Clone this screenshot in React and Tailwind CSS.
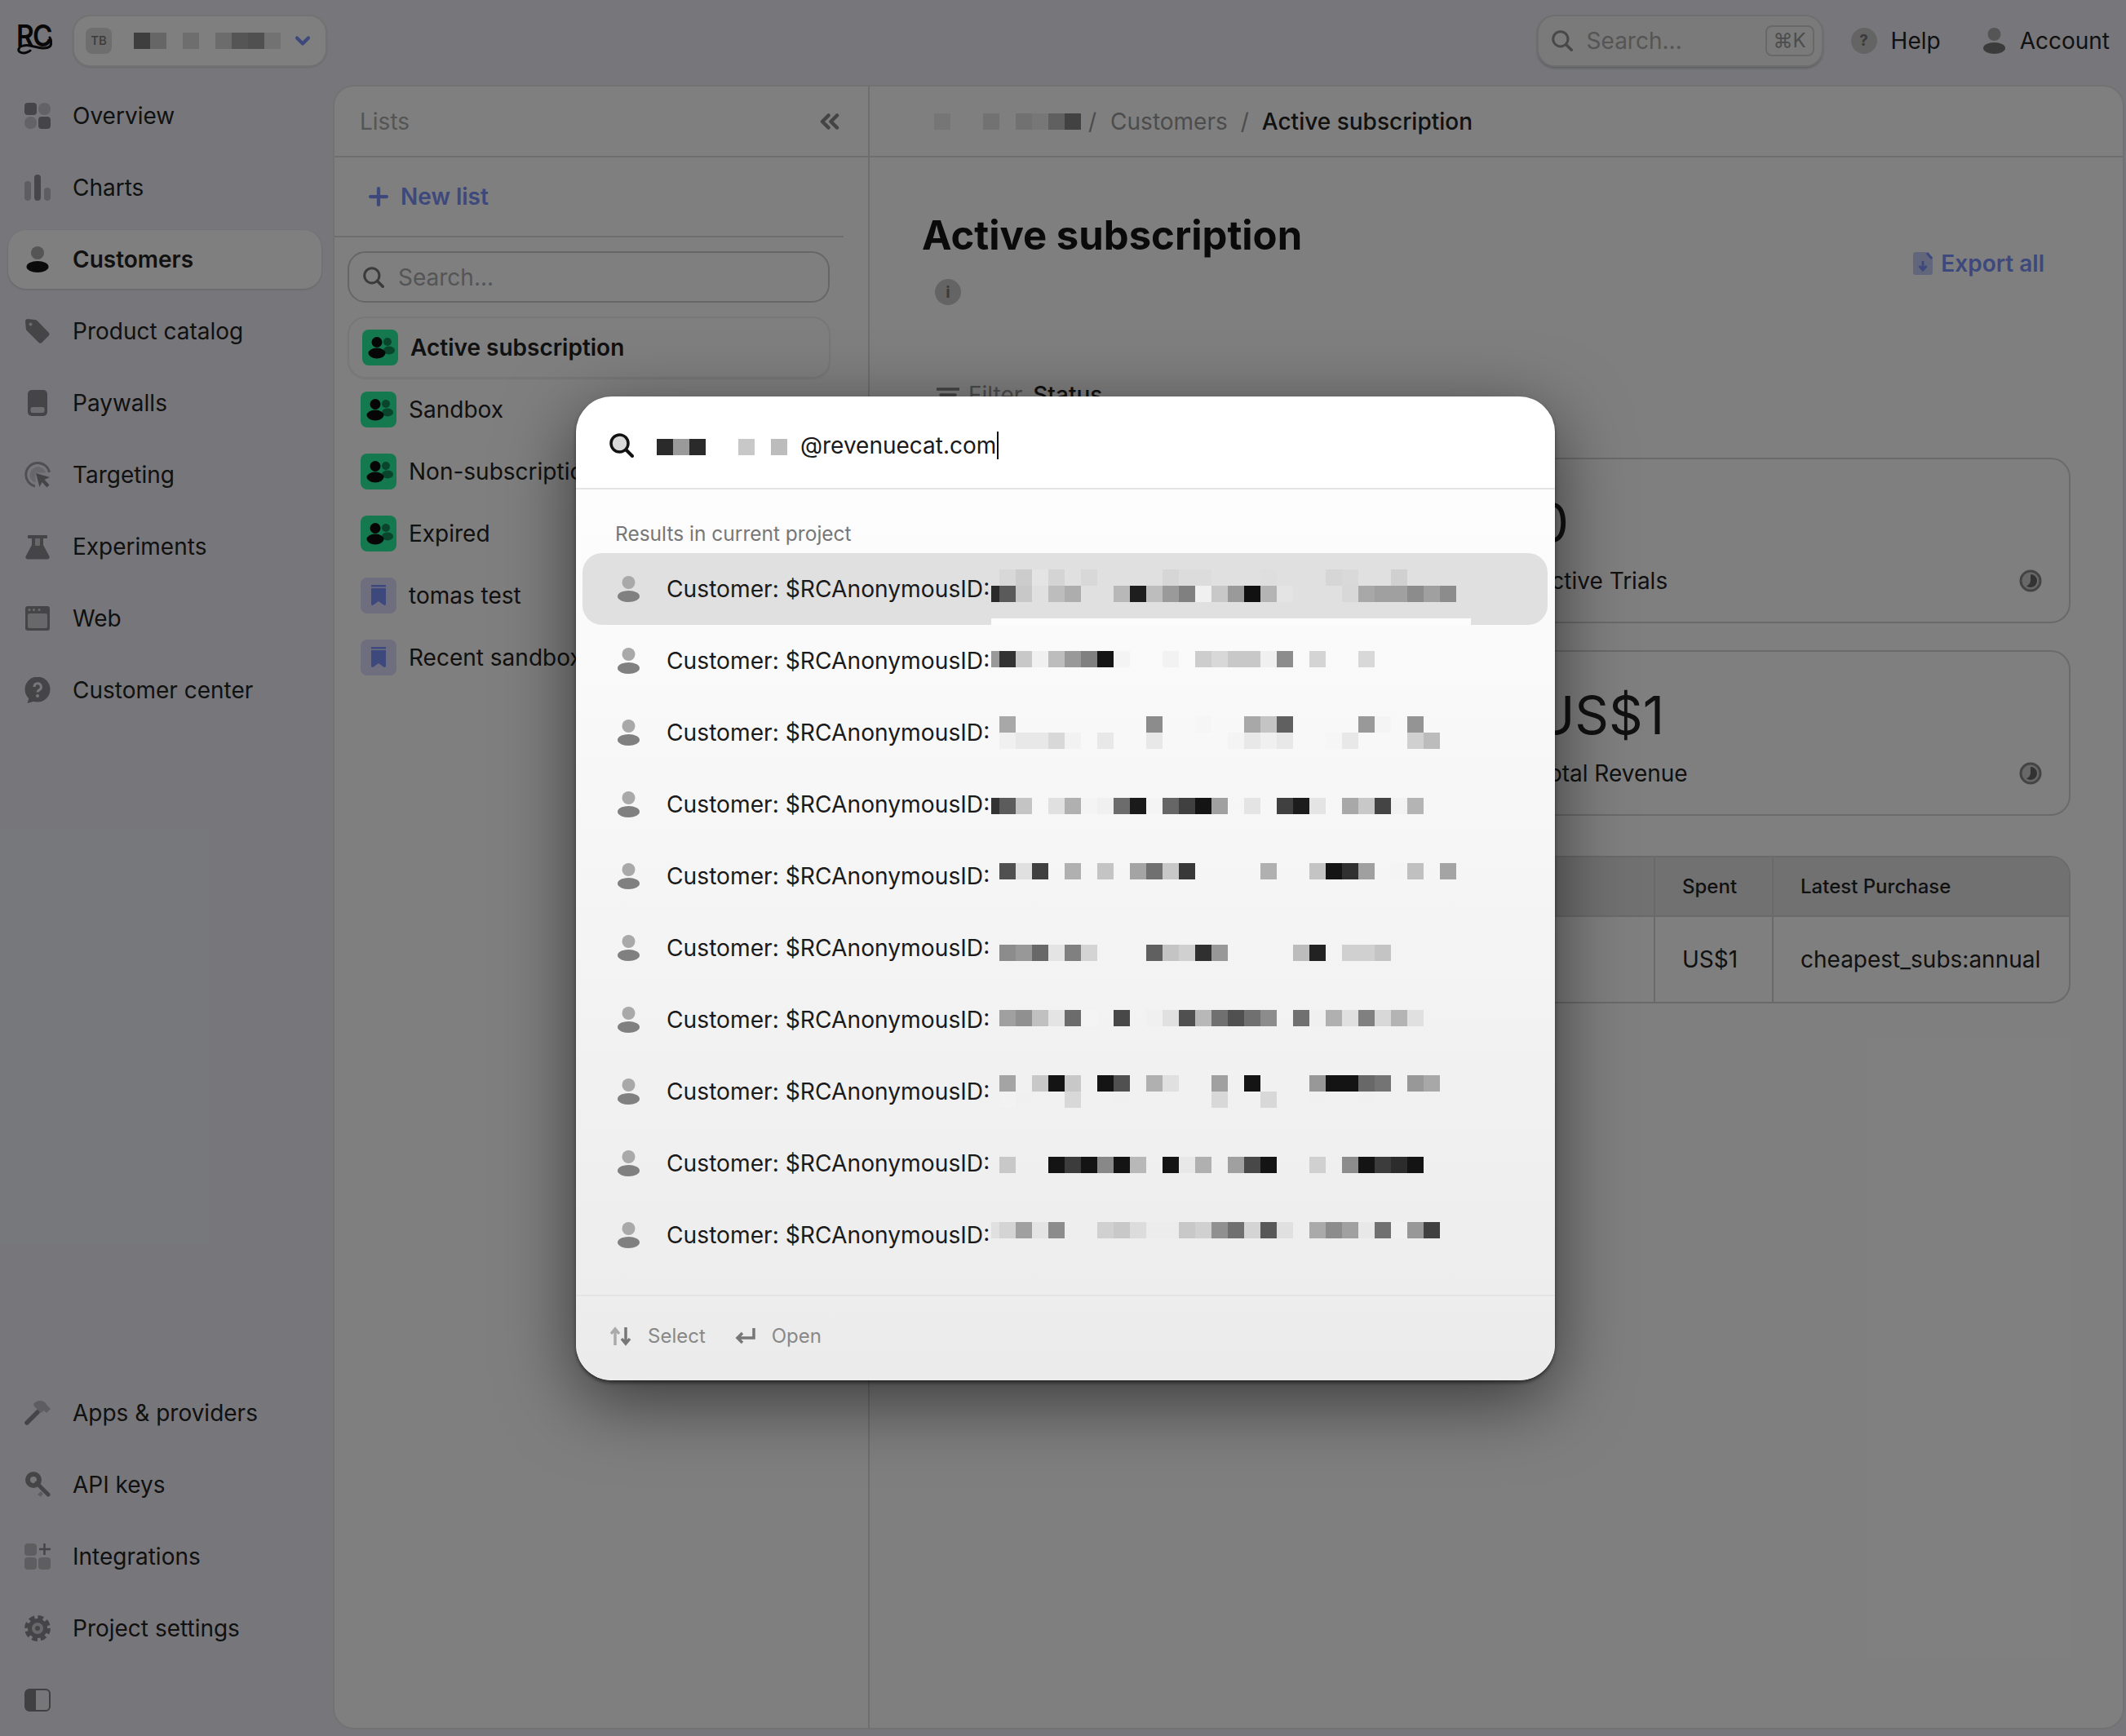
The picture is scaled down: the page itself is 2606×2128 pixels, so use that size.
import { ChevronDown, ChevronsLeft, Plus } from "lucide-react";

const topNav = [
  { label: "Overview", icon: OverviewIcon },
  { label: "Charts", icon: ChartsIcon },
  { label: "Customers", icon: CustomersIcon, active: true },
  { label: "Product catalog", icon: TagIcon },
  { label: "Paywalls", icon: PaywallIcon },
  { label: "Targeting", icon: TargetIcon },
  { label: "Experiments", icon: FlaskIcon },
  { label: "Web", icon: WebIcon },
  { label: "Customer center", icon: HelpBubbleIcon },
];

const bottomNav = [
  { label: "Apps & providers", icon: HammerIcon },
  { label: "API keys", icon: KeyIcon },
  { label: "Integrations", icon: IntegrationsIcon },
  { label: "Project settings", icon: GearIcon },
];

const lists = [
  { label: "Active subscription", kind: "people", active: true },
  { label: "Sandbox", kind: "people" },
  { label: "Non-subscription", kind: "people" },
  { label: "Expired", kind: "people" },
  { label: "tomas test", kind: "saved" },
  { label: "Recent sandbox", kind: "saved" },
];

// redacted ids, "column:grey" per cell on a 20px grid
const results = [
  {
    top: 20,
    cells: [
      "0:d8 1:cc 2:e4 3:d4 4:e0 5:d8 10:d6 11:dc 12:dc 16:de 20:d6 21:d9 24:d0",
      "-1:2a 0:5a 1:c8 3:bd 4:ad 7:b8 8:1e 9:bd 10:9a 11:80 12:f0 13:c8 14:9a 15:11 16:b4 17:e4 21:d8 22:a8 23:a0 24:a0 25:8c 26:a0 27:8c",
    ],
  },
  { top: 32, cells: ["-1:99 0:33 1:c8 2:f0 3:bd 4:99 5:80 6:15 7:f4 10:f2 12:cd 13:d8 14:c8 15:c8 16:f0 17:8c 19:d4 22:d8"] },
  {
    top: 24,
    cells: [
      "0:a8 9:8c 12:f6 15:a8 16:c4 17:60 22:99 23:f4 25:94",
      "0:f0 1:e8 2:e8 3:d8 4:f2 6:e8 9:e8 14:f4 15:e8 16:f0 17:e8 20:f6 21:e8 23:f8 25:d0 26:bc",
    ],
  },
  { top: 36, cells: ["-1:33 0:5c 1:c4 3:e0 4:b0 5:f4 6:f0 7:6c 8:1a 9:f4 10:66 11:40 12:14 13:a0 14:f6 15:e4 17:40 18:1c 19:e4 21:a8 22:c8 23:44 24:f2 25:b4"] },
  { top: 28, cells: ["0:50 1:e0 2:40 4:b0 6:c4 8:a4 9:70 10:c8 11:38 16:b0 19:c4 20:14 21:30 22:a0 24:f4 25:c0 27:a4"] },
  { top: 40, cells: ["0:8c 1:98 2:68 3:e4 4:80 5:d4 9:60 10:c4 11:d0 12:30 13:98 18:bc 19:22 21:d0 22:d0 23:c4"] },
  { top: 32, cells: ["0:a0 1:90 2:c0 3:e4 4:6c 5:f4 7:48 9:f0 10:e0 11:50 12:b8 13:70 14:50 15:70 16:8c 18:70 19:f0 20:b0 21:e0 22:80 23:d8 24:b4 25:e0"] },
  {
    top: 24,
    cells: [
      "0:a4 2:c8 3:14 4:c8 6:14 7:50 9:b0 10:e0 13:a0 15:14 19:98 20:14 21:14 22:68 23:74 25:98 26:a8",
      "0:f2 1:f0 4:d8 7:f0 13:d8 16:d8 19:f0 22:f0",
    ],
  },
  { top: 36, cells: ["0:c8 3:14 4:3c 5:14 6:88 7:14 8:b8 10:14 11:e8 12:b0 14:a0 15:48 16:14 19:d0 21:8c 22:14 23:3c 24:2c 25:14"] },
  { top: 28, cells: ["-1:e0 0:d4 1:a0 2:e4 3:8c 6:d0 7:c8 8:dc 9:ec 10:ec 11:c8 12:d0 13:90 14:70 15:d4 16:58 17:e0 19:aa 20:8c 21:a0 22:e8 23:70 24:f0 25:98 26:40"] },
];

function Mosaic({ lines, width, className = "", style }) {
  return (
    <svg width={width} height={lines.length * 20} className={className} style={style}>
      {lines.map((line, y) =>
        line.split(" ").map((cell) => {
          const [col, grey] = cell.split(":");
          const n = Number(col);
          return (
            <rect
              key={cell + y}
              x={n < 0 ? 0 : 10 + n * 20}
              y={y * 20}
              width={n < 0 ? 10 : 20}
              height={20}
              fill={`#${grey}${grey}${grey}`}
            />
          );
        })
      )}
    </svg>
  );
}

function OverviewIcon() {
  return (
    <svg viewBox="0 0 32 32" className="w-8 h-8">
      <rect width="15" height="15" rx="4" fill="#8a8a8e" />
      <rect x="17" width="15" height="15" rx="7" fill="#c6c6ca" />
      <rect y="17" width="15" height="15" rx="7" fill="#c6c6ca" />
      <rect x="17" y="17" width="15" height="15" rx="4" fill="#8a8a8e" />
    </svg>
  );
}

function ChartsIcon() {
  return (
    <svg viewBox="0 0 32 32" className="w-8 h-8">
      <rect y="8" width="8" height="24" rx="4" fill="#bcbcc0" />
      <rect x="12" width="8" height="32" rx="4" fill="#8e8e92" />
      <rect x="24" y="16" width="8" height="16" rx="4" fill="#bcbcc0" />
    </svg>
  );
}

function CustomersIcon() {
  return (
    <svg viewBox="0 0 32 32" className="w-8 h-8">
      <circle cx="16" cy="8" r="8" fill="#aaaaaa" />
      <ellipse cx="16" cy="25" rx="13.500" ry="7" fill="#141414" />
    </svg>
  );
}

function TagIcon() {
  return (
    <svg viewBox="0 0 32 32" className="w-8 h-8">
      <path
        d="M1 4C1 2 2.400.8 4.300 1l8.700 1a4 4 0 0 1 2.400 1.100l14.100 14.400a3 3 0 0 1 0 4.200l-8 8a3 3 0 0 1-4.200 0L3 15.500a4 4 0 0 1-1.200-2.600z"
        fill="#8a8a8e"
      />
      <circle cx="7.500" cy="7.500" r="2" fill="#d8d8dc" />
    </svg>
  );
}

function PaywallIcon() {
  return (
    <svg viewBox="0 0 32 32" className="w-8 h-8">
      <rect x="4" width="24" height="32" rx="5" fill="#8a8a8e" />
      <rect x="7.500" y="21" width="17" height="7" rx="2.500" fill="#dcdce0" />
    </svg>
  );
}

function TargetIcon() {
  return (
    <svg viewBox="0 0 32 32" className="w-8 h-8">
      <path d="M13 30A14.500 14.500 0 1 1 30.500 13" fill="none" stroke="#a0a0a4" strokeWidth="3" />
      <path d="M13 25A9.500 9.500 0 1 1 25.500 13L13 13z" fill="#d0d0d4" stroke="#d0d0d4" strokeWidth="1" />
      <path d="M14 14l17 5-6.500 3 6 6.500-3 3-6-6.500-3 6z" fill="#8a8a8e" />
    </svg>
  );
}

function FlaskIcon() {
  return (
    <svg viewBox="0 0 32 32" className="w-8 h-8">
      <rect x="4" y="2" width="24" height="4" rx="1" fill="#8a8a8e" />
      <path d="M9 6h14v8l7.500 14a2.500 2.500 0 0 1-2.200 3.500H3.700A2.500 2.500 0 0 1 1.500 28L9 14z" fill="#8a8a8e" />
      <rect x="13" y="6" width="6" height="9" rx="1" fill="#d0d0d4" />
    </svg>
  );
}

function WebIcon() {
  return (
    <svg viewBox="0 0 32 32" className="w-8 h-8">
      <rect x="1" y="1" width="30" height="30" rx="3" fill="#8a8a8e" />
      <rect x="4" y="10" width="24" height="18" rx="2" fill="#d0d0d4" />
      <circle cx="6" cy="5.500" r="1.500" fill="#d8d8dc" />
      <circle cx="11.500" cy="5.500" r="1.500" fill="#d8d8dc" />
      <circle cx="18" cy="5.500" r="1.500" fill="#d8d8dc" />
    </svg>
  );
}

function HelpBubbleIcon() {
  return (
    <svg viewBox="0 0 32 32" className="w-8 h-8">
      <circle cx="16" cy="15" r="15.500" fill="#8a8a8e" />
      <path d="M6 24l-2.500 8 11-3z" fill="#8a8a8e" />
      <path d="M12 12a4.200 4.200 0 1 1 6.300 3.600c-1.500.9-2.300 1.500-2.300 3" fill="none" stroke="#eeeef2" strokeWidth="3" />
      <circle cx="16" cy="23" r="2" fill="#eeeef2" />
    </svg>
  );
}

function HammerIcon() {
  return (
    <svg viewBox="0 0 32 32" className="w-8 h-8">
      <path d="M3 28L16 15" stroke="#8a8a8e" strokeWidth="5.500" strokeLinecap="round" />
      <path d="M11 5c4-5 11-5 15-1l2 3 4 4-5 5-3-3-4 3-8-8z" fill="#bcbcc0" />
    </svg>
  );
}

function KeyIcon() {
  return (
    <svg viewBox="0 0 32 32" className="w-8 h-8">
      <path d="M20 24l3 3-3 4-4-3z" fill="#bcbcc0" />
      <circle cx="11" cy="10" r="7" fill="#eeeef2" stroke="#8a8a8e" strokeWidth="6" />
      <path d="M15 14l14 14" stroke="#8a8a8e" strokeWidth="5" strokeLinecap="round" />
    </svg>
  );
}

function IntegrationsIcon() {
  return (
    <svg viewBox="0 0 32 32" className="w-8 h-8">
      <rect width="15" height="15" rx="4" fill="#bcbcc0" />
      <rect y="17" width="15" height="15" rx="4" fill="#bcbcc0" />
      <rect x="17" y="17" width="15" height="15" rx="4" fill="#bcbcc0" />
      <path d="M24.500 0v14M18 7h14" stroke="#8a8a8e" strokeWidth="2.500" />
    </svg>
  );
}

function GearIcon() {
  return (
    <svg viewBox="0 0 32 32" className="w-8 h-8">
      <circle cx="16" cy="16" r="13.500" fill="none" stroke="#8a8a8e" strokeWidth="5" strokeDasharray="6.600 4" />
      <circle cx="16" cy="16" r="12" fill="#8a8a8e" />
      <circle cx="16" cy="16" r="7" fill="#d0d0d4" />
      <circle cx="16" cy="16" r="3" fill="#8a8a8e" />
    </svg>
  );
}

function ToggleIcon() {
  return (
    <svg viewBox="0 0 32 32" className="w-8 h-8">
      <rect x="1" y="3" width="30" height="26" rx="5" fill="#eeeef2" stroke="#808084" strokeWidth="2" />
      <path d="M6 3h8v26H6a5 5 0 0 1-5-5V8a5 5 0 0 1 5-5z" fill="#808084" />
    </svg>
  );
}

function PersonIcon({ head, body, className }) {
  return (
    <svg viewBox="0 0 27 32" className={className}>
      <circle cx="13.500" cy="8" r="8" fill={head} />
      <ellipse cx="13.500" cy="25" rx="13.500" ry="7" fill={body} />
    </svg>
  );
}

function SearchIcon({ ring, fill, className }) {
  return (
    <svg viewBox="0 0 30 30" className={className}>
      <circle cx="12.500" cy="12.500" r="10.500" fill={fill} stroke={ring} strokeWidth="3.500" />
      <path d="M20.500 20.500l7.500 7.500" stroke={ring} strokeWidth="4" strokeLinecap="round" />
    </svg>
  );
}

function PeopleIcon() {
  return (
    <svg viewBox="0 0 44 44" className="w-11 h-11">
      <circle cx="31" cy="15" r="5" fill="#128a58" />
      <ellipse cx="33" cy="25.500" rx="7" ry="5" fill="#128a58" />
      <circle cx="18" cy="15.500" r="6.500" fill="#0c0c0c" />
      <ellipse cx="18" cy="29" rx="10.500" ry="6.500" fill="#0c0c0c" />
    </svg>
  );
}

function BookmarkIcon() {
  return (
    <svg viewBox="0 0 44 44" className="w-11 h-11">
      <path d="M13 9h18v2.500H13z" fill="#7a90f8" />
      <path d="M13 13h18v19.500a1.500 1.500 0 0 1-2.400 1.200L22 29l-6.600 4.700a1.500 1.500 0 0 1-2.400-1.200z" fill="#7a90f8" />
    </svg>
  );
}

function PieClockIcon() {
  return (
    <svg viewBox="0 0 28 28" className="w-7 h-7">
      <circle cx="14" cy="14" r="12" fill="#d0d0d0" stroke="#888888" strokeWidth="3" />
      <path d="M14 6a8 8 0 0 1 0 16c-2 0-3.500-.6-5-1.700 3-1 5-4 5-7.300z" fill="#666666" />
    </svg>
  );
}

function NavItem({ item }) {
  const Icon = item.icon;
  return (
    <div className="h-[88px] flex items-center px-[10px]">
      <div
        className={`w-[384px] h-[72px] pl-5 flex items-center gap-[27px] rounded-[22px] text-[28px] text-[#222222] ${
          item.active ? "bg-white font-semibold shadow-[0_1px_3px_rgba(0,0,0,0.18)]" : ""
        }`}
      >
        <Icon />
        <span>{item.label}</span>
      </div>
    </div>
  );
}

function Sidebar() {
  return (
    <aside className="w-[410px] shrink-0 -mt-2 flex flex-col">
      {topNav.map((item) => (
        <NavItem key={item.label} item={item} />
      ))}
      <div className="mt-auto">
        {bottomNav.map((item) => (
          <NavItem key={item.label} item={item} />
        ))}
        <div className="h-[88px] flex items-center pl-[30px]">
          <ToggleIcon />
        </div>
      </div>
    </aside>
  );
}

function TopBar() {
  return (
    <header className="h-[106px] pb-[6px] flex items-center pr-5">
      <div className="relative ml-5 w-11 h-[42px]">
        <span className="block origin-left scale-x-90 text-[37px] leading-[30px] font-semibold tracking-[-2px] text-[#111111]">RC</span>
        <svg viewBox="0 0 44 42" className="absolute inset-0 w-11 h-[42px]">
          <path
            d="M41 17c2 3 2.500 9 0 11-5 4-15 1-24-1-6-1-13 0-14 4-1 3 2 5 6 5 3 0 7-2 8-3"
            fill="none"
            stroke="#111111"
            strokeWidth="3"
            strokeLinecap="round"
          />
        </svg>
      </div>
      <div className="ml-[25px] w-[312px] h-16 pl-[14px] flex items-center rounded-[22px] bg-white border-2 border-[#e4e4e4] shadow-[0_1px_2px_rgba(0,0,0,0.12)]">
        <span className="w-8 h-8 rounded-lg bg-[#dcdcdc] flex items-center justify-center text-[15px] font-medium text-[#777777]">TB</span>
        <Mosaic lines={["0:7c 1:cc 3:dc 4:ff 5:d8 6:aa 7:a0 8:e4"]} width={190} className="ml-[17px]" />
        <ChevronDown className="w-7 h-7 ml-[13px] text-[#7a90f8]" strokeWidth={3.5} />
      </div>
      <div className="ml-auto w-[351px] h-16 pl-[16px] pr-[9px] flex items-center rounded-[22px] bg-[#f5f5f5] border-2 border-[#dddddd] shadow-[0_2px_3px_rgba(0,0,0,0.2)]">
        <SearchIcon ring="#909090" fill="none" className="w-[26px] h-[28px]" />
        <span className="ml-[17px] text-[28px] text-[#aaaaaa]">Search...</span>
        <span className="ml-auto w-[60px] h-[38px] rounded-lg border-2 border-[#d0d0d0] flex items-center justify-center text-[24px] text-[#999999] font-['Inter','DejaVu_Sans',sans-serif]">
          ⌘K
        </span>
      </div>
      <span className="ml-[34px] w-8 h-8 rounded-full bg-[#c8c8c8] flex items-center justify-center text-[19px] font-bold text-[#777777]">?</span>
      <span className="ml-[17px] text-[28px] text-[#222222]">Help</span>
      <PersonIcon head="#aaaaaa" body="#777777" className="ml-[52px] w-[27px] h-8" />
      <span className="ml-[18px] text-[28px] text-[#222222]">Account</span>
    </header>
  );
}

function ListsPanel() {
  return (
    <section className="w-[656px] shrink-0 border-r-2 border-[#dcdcdc]">
      <div className="h-[87px] pl-[31px] pr-[29px] flex items-center justify-between border-b-2 border-[#dcdcdc]">
        <span className="text-[28px] text-[#aaaaaa]">Lists</span>
        <ChevronsLeft className="w-9 h-9 text-[#888888]" strokeWidth={3} />
      </div>
      <div className="h-[98px] w-[624px] pl-[37px] flex items-center border-b-2 border-[#dcdcdc] text-[#7a90f8]">
        <Plus className="w-[34px] h-[34px]" strokeWidth={3} />
        <span className="ml-[10px] text-[28px] font-semibold">New list</span>
      </div>
      <div className="ml-4 mt-[17px] w-[591px] h-[63px] pl-[17px] flex items-center rounded-[22px] border-2 border-[#cccccc]">
        <SearchIcon ring="#777777" fill="none" className="w-[26px] h-[26px]" />
        <span className="ml-[17px] text-[28px] text-[#aaaaaa]">Search...</span>
      </div>
      <div className="mt-[17px] ml-4 w-[592px]">
        {lists.map((list) => (
          <div
            key={list.label}
            className={`h-[76px] pl-4 flex items-center gap-[15px] rounded-[22px] text-[28px] whitespace-nowrap text-[#222222] ${
              list.active ? "border-2 border-[#eeeeee] font-semibold shadow-[0_1px_2px_rgba(0,0,0,0.08)]" : ""
            }`}
          >
            <span
              className={`w-11 h-11 rounded-lg shrink-0 ${
                list.kind === "people" ? "bg-[#28f29e]" : "bg-[#dcdcff]"
              }`}
            >
              {list.kind === "people" ? <PeopleIcon /> : <BookmarkIcon />}
            </span>
            {list.label}
          </div>
        ))}
      </div>
    </section>
  );
}

function StatCard({ value, label }) {
  return (
    <div className="col-start-2 h-[203px] pt-[37px] pl-[30px] pr-[33px] rounded-[24px] border-2 border-[#d4d4d4]">
      <div className="h-20 flex items-center text-[65px] leading-none text-[#222222]">{value}</div>
      <div className="mt-[12px] h-10 flex items-center justify-between text-[28px] text-[#222222]">
        <span>{label}</span>
        <PieClockIcon />
      </div>
    </div>
  );
}

function ContentPanel() {
  return (
    <section className="flex-1 min-w-0">
      <div className="h-[87px] pl-[79px] flex items-center border-b-2 border-[#dcdcdc] text-[28px]">
        <Mosaic lines={["0:ec 3:e4 5:e2 6:ee 7:c0 8:84"]} width={190} className="-ml-[10px]" />
        <span className="text-[#999999] ml-[9px]">/</span>
        <span className="text-[#999999] ml-[17px]">Customers</span>
        <span className="text-[#999999] ml-[16px]">/</span>
        <span className="text-[#222222] ml-[16px] font-medium">Active subscription</span>
      </div>
      <div className="pl-[64px] pr-[64px]">
        <div className="flex justify-between items-start pt-[67px]">
          <div>
            <h1 className="h-[58px] text-[49px] leading-[58px] font-bold text-[#141414]">Active subscription</h1>
            <span className="mt-6 ml-4 w-8 h-8 rounded-full bg-[#c8c8c8] flex items-center justify-center text-[20px] font-bold text-[#777777]">i</span>
          </div>
          <div className="mt-[42px] mr-[32px] flex items-center gap-[10px] text-[28px] font-semibold text-[#7a90f8]">
            <svg viewBox="0 0 24 28" className="w-6 h-7">
              <path d="M3 0h13l8 8v17a3 3 0 0 1-3 3H3a3 3 0 0 1-3-3V3a3 3 0 0 1 3-3z" fill="#c4ccf4" />
              <path d="M17 1l6 7M12 11v10M7.500 17l4.500 5 4.500-5" fill="none" stroke="#7a90f8" strokeWidth="3" />
            </svg>
            Export all
          </div>
        </div>
        <div className="mt-[90px] pl-[18px] h-10 flex items-center text-[28px]">
          <svg viewBox="0 0 28 20" className="w-7 h-5">
            <path d="M1 3h26M5 10h18M9 17h10" stroke="#888888" strokeWidth="3.500" strokeLinecap="round" />
          </svg>
          <span className="ml-[11px] text-[#999999]">Filter</span>
          <span className="ml-[13px] text-[#222222] font-medium">Status</span>
        </div>
        <div className="mt-[57px] grid grid-cols-2 gap-x-8 gap-y-[33px]">
          <StatCard value="0" label="Active Trials" />
          <StatCard value="US$1" label="Total Revenue" />
        </div>
        <div className="mt-[49px] h-[181px] rounded-[24px] border-2 border-[#d4d4d4] overflow-hidden text-[#222222]">
          <div className="h-[73px] flex items-center bg-[#e2e2e2] border-b-2 border-[#d4d4d4] text-[24px] font-medium">
            <div className="flex-1 h-full" />
            <div className="w-[145px] h-full pl-[33px] flex items-center border-l-2 border-[#d4d4d4]">Spent</div>
            <div className="w-[364px] h-full pl-[33px] flex items-center border-l-2 border-[#d4d4d4]">Latest Purchase</div>
          </div>
          <div className="h-[104px] flex items-center text-[28px]">
            <div className="flex-1 h-full" />
            <div className="w-[145px] h-full pl-[33px] flex items-center border-l-2 border-[#d4d4d4]">US$1</div>
            <div className="w-[364px] h-full pl-[33px] flex items-center border-l-2 border-[#d4d4d4]">cheapest_subs:annual</div>
          </div>
        </div>
      </div>
    </section>
  );
}

function SearchModal() {
  return (
    <div className="absolute left-[706px] top-[486px] w-[1200px] h-[1206px] flex flex-col rounded-[44px] bg-white overflow-hidden">
      <div className="h-[114px] shrink-0 pl-[41px] pt-[8px] flex items-center border-b-2 border-[#e4e4e4]">
        <SearchIcon ring="#111111" fill="#d8d8d8" className="w-[30px] h-[30px]" />
        <Mosaic lines={["0:2a 1:9a 2:2a 5:c8 7:bc"]} width={170} className="ml-[18px] mt-[4px]" />
        <span className="ml-[16px] text-[28px] text-[#1a1a1a]">@revenuecat.com</span>
        <span className="ml-px w-[2px] h-[34px] bg-[#111111]" />
      </div>
      <div className="flex-1 flex flex-col bg-linear-to-b from-[#fdfdfd] to-[#ebebeb]">
        <div className="mt-[39px] pl-[48px] h-[30px] flex items-center text-[24.500px] text-[#777777]">Results in current project</div>
        <div className="mt-[9px] mx-2 w-[1183px]">
          {results.map((row, i) => (
            <div
              key={i}
              className={`relative h-[88px] pl-[43px] flex items-center gap-[33px] rounded-[24px] ${
                i === 0 ? "bg-[#e0e0e0]" : ""
              }`}
            >
              <PersonIcon head="#a9a9a9" body="#808080" className="w-[27px] h-8" />
              <span className="text-[28.200px] text-[#1a1a1a] whitespace-nowrap">Customer: $RCAnonymousID:</span>
              <Mosaic lines={row.cells} width={600} className="absolute left-[501px]" style={{ top: row.top }} />
              {i === 0 && <div className="absolute left-[501px] bottom-0 w-[588px] h-2 bg-[#fcfcfc]" />}
            </div>
          ))}
        </div>
        <div className="mt-auto h-[105px] pl-[42px] pb-[6px] flex items-center border-t-2 border-[#e4e4e4] text-[24px] text-[#888888]">
          <svg viewBox="0 0 26 24" className="w-[26px] h-6">
            <path d="M6 23V4M1 9l5-6 5 6" fill="none" stroke="#aaaaaa" strokeWidth="3.500" />
            <path d="M19 1v19M14 15l5 6 5-6" fill="none" stroke="#777777" strokeWidth="3.500" />
          </svg>
          <span className="ml-[20px]">Select</span>
          <svg viewBox="0 0 26 24" className="ml-[36px] w-[26px] h-6">
            <path d="M23 2v12H4M9 8l-6 6 6 6" fill="none" stroke="#777777" strokeWidth="3.500" />
          </svg>
          <span className="ml-[19px]">Open</span>
        </div>
      </div>
    </div>
  );
}

export default function App() {
  return (
    <div className="relative w-[2606px] h-[2128px] overflow-hidden bg-[#eeeff6] font-['Inter',sans-serif]">
      <TopBar />
      <div className="flex h-[2022px]">
        <Sidebar />
        <main className="flex-1 mr-1 h-[2012px] flex bg-white rounded-[24px] ring-2 ring-[#e4e4e4]">
          <ListsPanel />
          <ContentPanel />
        </main>
      </div>
      <div className="absolute inset-0 bg-black/50" />
      <div className="absolute left-[706px] top-[486px] w-[1200px] h-[1206px] rounded-[44px] shadow-[0_24px_90px_rgba(0,0,0,0.55),0_3px_4px_rgba(0,0,0,0.5)]" />
      <SearchModal />
    </div>
  );
}
